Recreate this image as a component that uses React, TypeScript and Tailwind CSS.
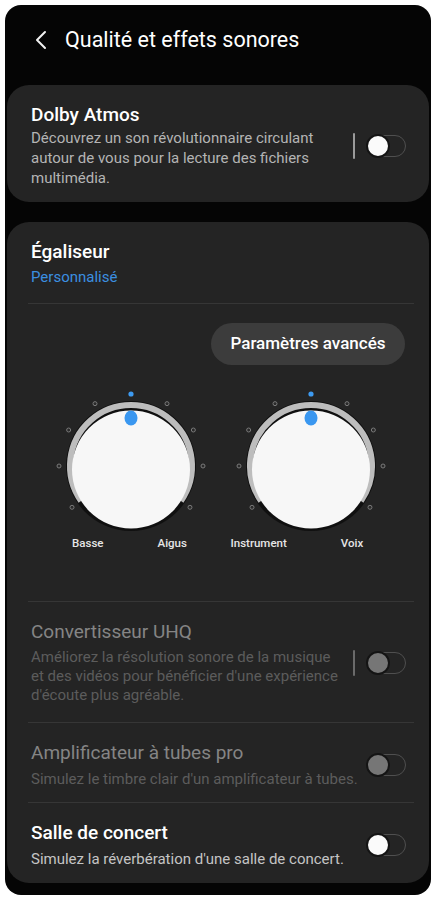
import React from 'react';

const font = { fontFamily: 'Roboto, "Noto Sans", Arial, sans-serif' };

function Toggle({ disabled = false, divider = false }: { disabled?: boolean; divider?: boolean }) {
    return (
        <div className="flex items-center gap-[11px] shrink-0">
            {divider && <div className={`w-[2px] h-[26px] rounded ${disabled ? 'bg-[#6a6a6a]' : 'bg-[#9a9a9a]'}`} />}
            <div className="relative w-[40px] h-[24px]">
                <div className="absolute left-[4px] right-0 top-[1px] bottom-[1px] rounded-full border-[1.5px] border-[#4f4f4f]" />
                <div
                    className={`absolute left-0 top-0 w-[24px] h-[24px] rounded-full border-2 border-[#141414] ${
                        disabled ? 'bg-[#767676]' : 'bg-[#fafafa]'
                    }`}
                />
            </div>
        </div>
    );
}

function Knob({ left, right }: { left: string; right: string }) {
    const cx = 80;
    const cy = 78;
    const angles = [-125, -90, -60, -30, 0, 30, 60, 90, 125];
    const r = 72;
    const a0 = (-125 * Math.PI) / 180;
    const a1 = (125 * Math.PI) / 180;
    const ar = 61;
    const arc = `M ${cx + ar * Math.sin(a0)} ${cy - ar * Math.cos(a0)} A ${ar} ${ar} 0 1 1 ${cx + ar * Math.sin(a1)} ${cy - ar * Math.cos(a1)}`;
    return (
        <div className="w-[160px] flex flex-col">
            <svg width="160" height="146" viewBox="0 0 160 146">
                {angles.map((a) => {
                    const rad = (a * Math.PI) / 180;
                    const x = cx + r * Math.sin(rad);
                    const y = cy - r * Math.cos(rad);
                    return a === 0 ? (
                        <circle key={a} cx={x} cy={y} r={2.6} fill="#3d9af0" />
                    ) : (
                        <circle key={a} cx={x} cy={y} r={2} fill="#2a2a2a" stroke="#7a7a7a" strokeWidth={1} />
                    );
                })}
                <circle cx={cx} cy={cy} r={65} fill="#101010" />
                <path d={arc} fill="none" stroke="#bdbdbd" strokeWidth={6} />
                <circle cx={cx} cy={cy + 3.5} r={59} fill="#f7f7f7" />
                <ellipse cx={cx} cy={cy - 48} rx={6.5} ry={7.5} fill="#3a97f0" />
            </svg>
            <div className="flex mt-[2px] text-[11.5px] leading-[14px] font-medium text-[#e6e6e6]">
                <div className="flex-1 text-right pr-[27px]">{left}</div>
                <div className="flex-1 text-left pl-[27px]">{right}</div>
            </div>
        </div>
    );
}

function Row({
    title,
    desc,
    disabled = false,
    divider = false,
    tight = false,
    pb = 'pb-[14px]',
}: {
    title: string;
    desc: string;
    disabled?: boolean;
    divider?: boolean;
    tight?: boolean;
    pb?: string;
}) {
    return (
        <div className={`flex items-center pl-[24px] pr-[23px] pt-[18px] ${pb}`}>
            <div className="flex-1 min-w-0 pr-[6px]">
                <p className={`text-[19px] leading-[24px] ${disabled ? 'text-[#858585]' : 'text-white font-medium'}`}>{title}</p>
                <p
                    className={`mt-[4px] text-[15px] ${tight ? 'leading-[19px]' : 'leading-[20px]'} ${
                        disabled ? 'text-[#5c5c5c]' : 'text-[#c4c4c4]'
                    }`}
                >
                    {desc}
                </p>
            </div>
            <Toggle disabled={disabled} divider={divider} />
        </div>
    );
}

export default function App() {
    return (
        <div className="w-[438px] h-[900px] bg-white p-[5px] pr-[7px]" style={font}>
            <div className="h-[890px] bg-[#050505] rounded-[16px] px-[2px] flex flex-col overflow-hidden">
                {/* header */}
                <div className="h-[80px] flex items-center pb-[10px]">
                    <svg className="ml-[28px]" width="14" height="20" viewBox="0 0 14 20">
                        <path d="M10 2 L2 10 L10 18" fill="none" stroke="#f2f2f2" strokeWidth="2" strokeLinecap="round" strokeLinejoin="round" />
                    </svg>
                    <h1 className="ml-[16px] text-[21.5px] text-white">Qualité et effets sonores</h1>
                </div>

                {/* dolby */}
                <div className="rounded-[22px] bg-[#242424] flex items-center pl-[24px] pr-[23px] pt-[18px] pb-[14px]">
                    <div className="flex-1 min-w-0 pr-[8px]">
                        <p className="text-[19px] leading-[24px] font-medium text-white">Dolby Atmos</p>
                        <p className="mt-px text-[15px] leading-[20px] text-[#b4b4b4]">
                            Découvrez un son révolutionnaire circulant autour de vous pour la lecture des fichiers multimédia.
                        </p>
                    </div>
                    <Toggle divider />
                </div>

                {/* equalizer card */}
                <div className="mt-[20px] rounded-[22px] bg-[#242424] flex flex-col">
                    <div className="pl-[24px] pt-[18px]">
                        <p className="text-[19px] leading-[24px] font-medium text-white">Égaliseur</p>
                        <p className="mt-[3px] text-[15px] leading-[20px] text-[#3b8fe0]">Personnalisé</p>
                    </div>
                    <div className="mt-[16px] ml-[21px] mr-[15px] h-px bg-[#363636]" />
                    <div className="flex justify-end mt-[19px] pr-[24px]">
                        <button className="h-[42px] w-[194px] rounded-full bg-[#3c3c3c] text-[17px] font-medium text-white">
                            Paramètres avancés
                        </button>
                    </div>
                    <div className="flex justify-center gap-[20px] mt-[23px] pl-[5px]">
                        <Knob left="Basse" right="Aigus" />
                        <Knob left="Instrument" right="Voix" />
                    </div>
                    <div className="mt-[51px] ml-[21px] mr-[15px] h-px bg-[#363636]" />
                    <Row
                        title="Convertisseur UHQ"
                        desc="Améliorez la résolution sonore de la musique et des vidéos pour bénéficier d'une expérience d'écoute plus agréable."
                        disabled
                        divider
                        tight
                        pb="pb-[17px]"
                    />
                    <div className="ml-[21px] mr-[15px] h-px bg-[#363636]" />
                    <Row title="Amplificateur à tubes pro" desc="Simulez le timbre clair d'un amplificateur à tubes." disabled pb="pb-[13px]" />
                    <div className="ml-[21px] mr-[15px] h-px bg-[#363636]" />
                    <Row title="Salle de concert" desc="Simulez la réverbération d'une salle de concert." pb="pb-[14px]" />
                </div>
            </div>
        </div>
    );
}
